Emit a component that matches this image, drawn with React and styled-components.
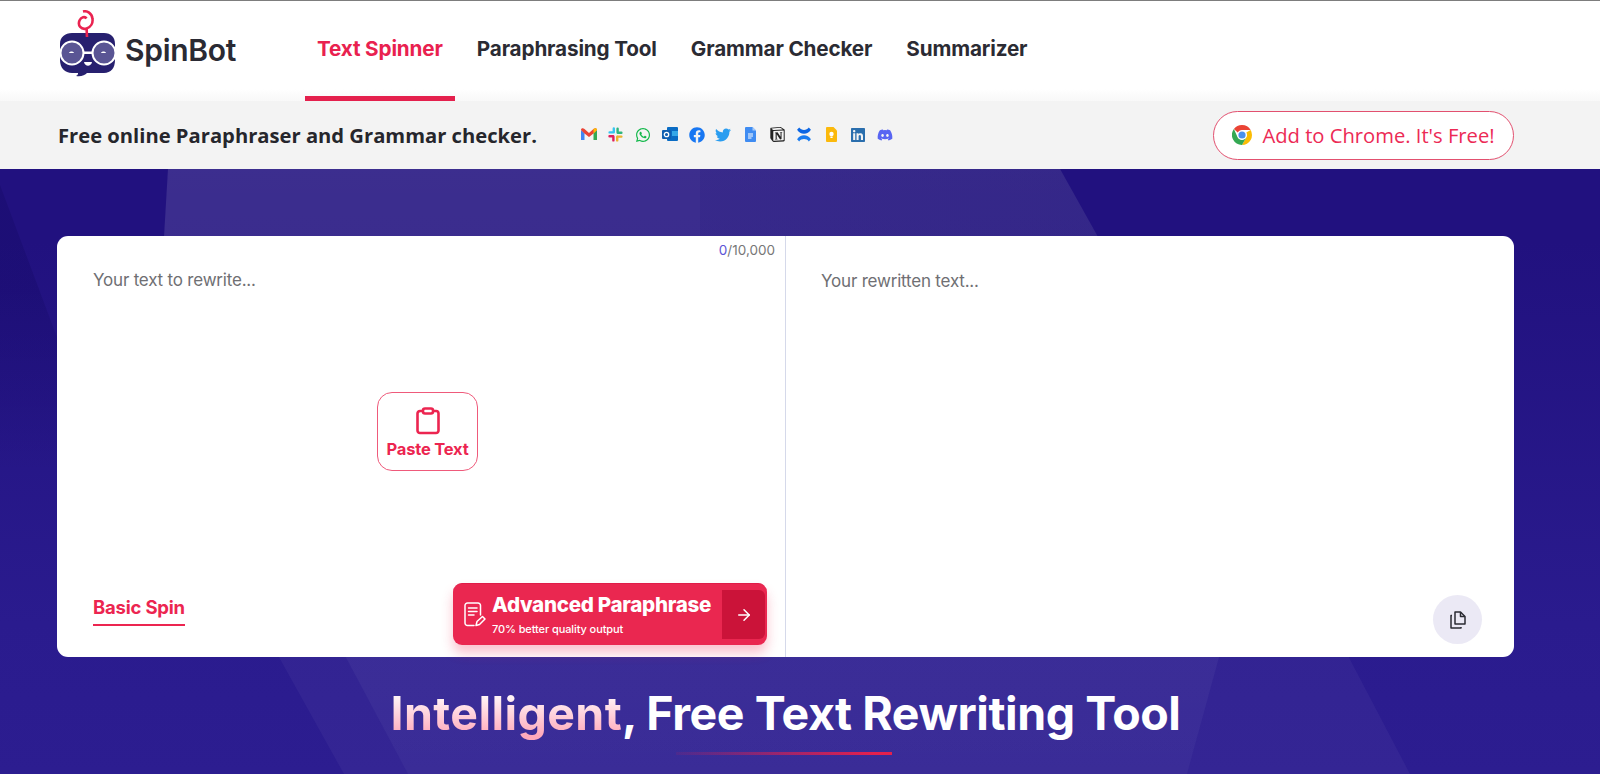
import React from 'react'
import styled, { createGlobalStyle } from 'styled-components'
import { FaWhatsapp, FaFacebook, FaTwitter, FaLinkedin, FaDiscord } from 'react-icons/fa'
import { SiNotion } from 'react-icons/si'
import { ArrowRight } from 'lucide-react'

const GlobalStyle = createGlobalStyle`
    html, body {
        margin: 0;
        padding: 0;
        background: #fff;
    }
    body {
        font-family: "Inter", "Liberation Sans", sans-serif;
        overflow: hidden;
    }
`;

const Page = styled.div`
    width: 1600px;
    height: 774px;
    display: flex;
    flex-direction: column;
    overflow: hidden;
    border-top: 1px solid #7d7d7d;
    box-sizing: border-box;
`;

const Header = styled.header`
    height: 100px;
    flex: none;
    display: flex;
    align-items: stretch;
    padding-left: 59px;
    background: linear-gradient(#fff 88%, #f8f8f8);
    box-sizing: border-box;
`;

const Brand = styled.div`
    display: flex;
    align-items: center;
    gap: 8px;
    width: 246px;
    flex: none;
`;

const LogoMark = styled.svg`
    align-self: flex-start;
    margin-top: 9px;
    flex: none;
`;

const BrandName = styled.span`
    font-size: 30px;
    font-weight: 600;
    letter-spacing: -0.3px;
    color: #2a2a33;
    margin-top: -2px;
`;

const Nav = styled.nav`
    display: flex;
    align-items: stretch;
    gap: 10px;
`;

const NavItem = styled.a`
    display: flex;
    align-items: center;
    padding: 0 12px;
    font-size: 20.7px;
    font-weight: 700;
    letter-spacing: -0.15px;
    white-space: nowrap;
    color: ${props => props.active ? '#e9214f' : '#2b2b33'};
    border-bottom: 5px solid ${props => props.active ? '#e4204d' : 'transparent'};
`;

const SubBar = styled.div`
    height: 68px;
    flex: none;
    display: flex;
    align-items: center;
    padding: 0 86px 0 58px;
    background: #f3f3f3;
    box-sizing: border-box;
`;

const Tagline = styled.h2`
    margin: 0;
    width: 523px;
    flex: none;
    font-family: "Open Sans", sans-serif;
    font-size: 20.2px;
    font-weight: 700;
    color: #26262c;
    white-space: nowrap;
`;

const AppIcons = styled.div`
    display: flex;
    align-items: center;
    gap: 10.9px;
    margin-top: -1px;
`;

const AppIcon = styled.span`
    width: 16px;
    height: 16px;
    display: flex;
    align-items: center;
    justify-content: center;
`;

const ChromeButton = styled.a`
    margin-left: auto;
    height: 49px;
    width: 301px;
    box-sizing: border-box;
    display: flex;
    align-items: center;
    justify-content: center;
    gap: 10px;
    background: #fff;
    border: 1px solid #e2506f;
    border-radius: 25px;
    font-family: "Open Sans", sans-serif;
    font-size: 20.2px;
    color: #ec2a55;
    white-space: nowrap;
`;

const Hero = styled.section`
    position: relative;
    flex: 1;
    overflow: hidden;
    background: linear-gradient(180deg, #21117f 0%, #21117f 12%, #2a1b8e 75%, #2c1d90 100%);
`;

const Backdrop = styled.div`
    position: absolute;
    inset: 0;
    clip-path: ${props => props.shape};
    background: ${props => props.tint};
`;

const HeroInner = styled.div`
    position: relative;
    padding: 67px 86px 0 57px;
    display: flex;
    flex-direction: column;
`;

const Card = styled.div`
    height: 421px;
    display: grid;
    grid-template-columns: 728px 1fr;
    background: #fff;
    border-radius: 11px;
`;

const Pane = styled.div`
    position: relative;
    padding: ${props => props.divided ? '35px 35px' : '34px 36px'};
    font-size: 17px;
    line-height: 21px;
    color: #6f6f73;
    letter-spacing: -0.2px;
    border-left: ${props => props.divided ? '1px solid #d5d9ea' : 'none'};
`;

const Counter = styled.span`
    position: absolute;
    top: 4px;
    right: 10px;
    font-size: 13.5px;
    letter-spacing: 0;
    color: #777;
`;

const CounterValue = styled.span`
    color: #5b54d6;
`;

const PasteButton = styled.button`
    position: absolute;
    left: 320px;
    top: 156px;
    width: 101px;
    height: 79px;
    box-sizing: border-box;
    padding: 14px 0 0;
    display: flex;
    flex-direction: column;
    align-items: center;
    gap: 4px;
    background: #fff;
    border: 1px solid #ef5a7b;
    border-radius: 15px;
    font-family: "Inter", sans-serif;
    font-size: 16.5px;
    font-weight: 700;
    letter-spacing: -0.2px;
    color: #ec2550;
    white-space: nowrap;
`;

const BasicSpin = styled.a`
    position: absolute;
    left: 36px;
    bottom: 31px;
    padding-bottom: 5px;
    font-size: 18.5px;
    line-height: 23px;
    font-weight: 700;
    letter-spacing: -0.2px;
    color: #ec2550;
    border-bottom: 2px solid #ec2550;
`;

const AdvancedButton = styled.button`
    position: absolute;
    right: 18px;
    bottom: 12px;
    width: 314px;
    height: 62px;
    box-sizing: border-box;
    padding: 0;
    display: flex;
    align-items: center;
    background: #ea2750;
    border: none;
    border-top: 1px solid #e01c48;
    border-radius: 9px;
    box-shadow: 0 8px 12px rgba(236, 39, 80, 0.28);
    color: #fff;
    font-family: "Inter", sans-serif;
    text-align: left;
`;

const AdvancedIcon = styled.span`
    display: flex;
    margin-left: 11px;
    margin-right: 6px;
`;

const AdvancedText = styled.span`
    flex: 1;
    display: flex;
    flex-direction: column;
    gap: 7px;
`;

const AdvancedTitle = styled.span`
    font-size: 20.6px;
    font-weight: 800;
    letter-spacing: -0.3px;
    line-height: 22px;
    white-space: nowrap;
`;

const AdvancedNote = styled.span`
    font-size: 11px;
    font-weight: 500;
    letter-spacing: -0.1px;
    line-height: 13px;
`;

const ArrowBox = styled.span`
    width: 43px;
    height: 49px;
    margin-right: 2px;
    display: flex;
    align-items: center;
    justify-content: center;
    background: #cb1339;
    border-radius: 0 6px 6px 0;
`;

const CopyButton = styled.button`
    position: absolute;
    right: 32px;
    bottom: 13px;
    width: 49px;
    height: 49px;
    padding: 0;
    display: flex;
    align-items: center;
    justify-content: center;
    background: #ebe9f5;
    border: none;
    border-radius: 50%;
`;

const Title = styled.h1`
    margin: 29px 0 0;
    text-align: center;
    font-size: 46.5px;
    font-weight: 700;
    line-height: 54px;
    letter-spacing: -0.45px;
    color: #fff;
    white-space: nowrap;
`;

const TitleAccent = styled.span`
    letter-spacing: 0.4px;
    background: linear-gradient(180deg, #fff 10%, #ffa9bb 90%);
    -webkit-background-clip: text;
    background-clip: text;
    color: transparent;
`;

const TitleRule = styled.div`
    width: 216px;
    height: 3px;
    margin: 12px 0 0 619px;
    background: linear-gradient(90deg, rgba(228, 32, 77, 0.1), #e4204d 92%);
`;

function Logo() {
    return (
        <LogoMark width="58" height="67" viewBox="0 0 58 67">
            <path d="M13 23 H45 C52 23 56 27 56 34 V50 C56 58 52 63 45 63 H28 C26 65 22 67 17 66 C19 65 19 64 19 63 H13 C6 63 1 58 1 50 V34 C1 27 6 23 13 23 Z" fill="#27206f" />
            <path d="M28 27 L27.6 18.5 C32 17 34 13 33.5 9 C33 3 28 .5 24 1.5 M27.6 18.5 C22 20 18.5 15.5 20.5 10.5 C22 7 26 6 27.5 8.5" fill="none" stroke="#ea2350" strokeWidth="2.6" />
            <circle cx="13" cy="43" r="11.5" fill="#5a5594" stroke="#fff" strokeWidth="2" />
            <circle cx="45" cy="43" r="11.5" fill="#5a5594" stroke="#fff" strokeWidth="2" />
            <rect x="24" y="41.5" width="10" height="2.5" fill="#fff" />
            <path d="M10 43 C10.5 41 14.5 41 15 43 Z" fill="#fff" />
            <path d="M42 43 C42.5 41 46.5 41 47 43 Z" fill="#fff" />
            <path d="M25 52 H33 C32 57 26 57 25 52 Z" fill="#fff" />
        </LogoMark>
    )
}

function Gmail() {
    return (
        <svg width="16" height="13" viewBox="0 0 16 13">
            <path d="M0 2 V12 H3.5 V5 Z" fill="#4285f4" />
            <path d="M16 2 V12 H12.5 V5 Z" fill="#34a853" />
            <path d="M0 2 C0 0 2 -.5 3.5 1 L8 5 L12.5 1 C14 -.5 16 0 16 2 L12.5 5.5 L8 9 L3.5 5.5 Z" fill="#ea4335" />
            <path d="M12.5 1 C14 -.5 16 0 16 2 L12.5 5.5 Z" fill="#fbbc04" />
        </svg>
    )
}

function Slack() {
    return (
        <svg width="15" height="15" viewBox="0 0 15 15" strokeWidth="2.4" strokeLinecap="round">
            <path d="M1.5 9.2 H5.2 M5.4 9.6 V13.4" stroke="#e01e5a" />
            <path d="M5.8 1.5 V5.2 M5.4 5.4 H1.6" stroke="#36c5f0" />
            <path d="M13.4 5.8 H9.8 M9.6 5.4 V1.6" stroke="#2eb67d" />
            <path d="M9.2 13.4 V9.8 M9.6 9.6 H13.4" stroke="#ecb22e" />
        </svg>
    )
}

function Outlook() {
    return (
        <svg width="16" height="15" viewBox="0 0 16 15">
            <rect x="5" y="0" width="11" height="14" rx="1" fill="#0a6cc4" />
            <rect x="10" y="4" width="6" height="5" fill="#35a8e8" />
            <rect x="0" y="3" width="9" height="9" rx="1" fill="#0f5fb0" />
            <circle cx="4.5" cy="7.5" r="2.2" fill="none" stroke="#fff" strokeWidth="1.3" />
        </svg>
    )
}

function Docs() {
    return (
        <svg width="11" height="15" viewBox="0 0 11 15">
            <path d="M1 0 H7.5 L11 3.5 V14 a1 1 0 0 1 -1 1 H1 a1 1 0 0 1 -1 -1 V1 a1 1 0 0 1 1 -1 Z" fill="#3f8cf2" />
            <path d="M7.5 0 L11 3.5 H7.5 Z" fill="#a9ccfa" />
            <path d="M3 7 H8 M3 9 H8 M3 11 H6.5" stroke="#fff" strokeWidth="1" />
        </svg>
    )
}

function Confluence() {
    return (
        <svg width="16" height="15" viewBox="0 0 15 14">
            <path d="M1 3 L3 1 C5 4 10 4 12 1 L14 3 C11 8 4 8 1 3 Z" fill="#0c66e4" transform="translate(0 -.5)" />
            <path d="M1 11 L3 13 C5 10 10 10 12 13 L14 11 C11 6 4 6 1 11 Z" fill="#1a7cf0" transform="translate(0 .5)" />
        </svg>
    )
}

function Keep() {
    return (
        <svg width="11" height="15" viewBox="0 0 11 15">
            <path d="M1 0 H7.5 L11 3.5 V14 a1 1 0 0 1 -1 1 H1 a1 1 0 0 1 -1 -1 V1 a1 1 0 0 1 1 -1 Z" fill="#fbb90c" />
            <circle cx="5.5" cy="7" r="2.2" fill="#fff" />
            <rect x="4.4" y="9.5" width="2.2" height="1.5" fill="#fff" />
        </svg>
    )
}

function Chrome() {
    return (
        <svg width="20" height="20" viewBox="0 0 20 20">
            <path d="M10 0 A10 10 0 0 1 18.66 5 H10 A5 5 0 0 0 5.7 7.5 L1.9 4.1 A10 10 0 0 1 10 0 Z" fill="#ea4335" />
            <path d="M18.66 5 A10 10 0 0 1 10 20 L14.3 12.5 A5 5 0 0 0 14.3 7.5 Z" fill="#fbbc04" />
            <path d="M10 20 A10 10 0 0 1 1.9 4.1 L5.7 12.5 A5 5 0 0 0 14.3 12.5 Z" fill="#34a853" />
            <circle cx="10" cy="10" r="4.6" fill="#fff" />
            <circle cx="10" cy="10" r="3.6" fill="#4a90ee" />
        </svg>
    )
}

function Clipboard() {
    return (
        <svg width="24" height="28" viewBox="0 0 24 28" fill="none" stroke="#ec2550" strokeWidth="2.6" strokeLinejoin="round">
            <path d="M7 4 H4 a2.5 2.5 0 0 0 -2.5 2.5 V23.5 A2.5 2.5 0 0 0 4 26 H20 a2.5 2.5 0 0 0 2.5 -2.5 V6.5 A2.5 2.5 0 0 0 20 4 H17" />
            <rect x="7" y="1.5" width="10" height="5" rx="2" />
        </svg>
    )
}

function NoteEdit() {
    return (
        <svg width="22" height="25" viewBox="0 0 22 25" fill="none" stroke="#fff" strokeWidth="1.5" strokeLinecap="round" strokeLinejoin="round">
            <path d="M10 23.5 H3.5 A2.5 2.5 0 0 1 1 21 V3.5 A2.5 2.5 0 0 1 3.5 1 H14 A2.5 2.5 0 0 1 16.5 3.5 V13" />
            <path d="M4.5 6 H13 M4.5 9.5 H13 M4.5 13 H10" />
            <path d="M12 23.5 L13 19.5 L18.5 14.5 L21 17 L15.5 22.5 Z" />
        </svg>
    )
}

function CopyIcon() {
    return (
        <svg width="16" height="18" viewBox="0 0 16 18" fill="none" stroke="#2b2b33" strokeWidth="1.5" strokeLinejoin="round">
            <path d="M5 1 H10.5 L15 5.5 V13 H5 Z" />
            <path d="M10.5 1 V5.5 H15" />
            <path d="M2 4.5 H1 V17 H11 V16" />
        </svg>
    )
}

const apps = [
    <Gmail />,
    <Slack />,
    <FaWhatsapp size={16} color="#12b84a" />,
    <Outlook />,
    <FaFacebook size={16} color="#1877f2" />,
    <FaTwitter size={16} color="#2a9df0" />,
    <Docs />,
    <SiNotion size={15} color="#222" />,
    <Confluence />,
    <Keep />,
    <FaLinkedin size={16} color="#2a6ead" />,
    <FaDiscord size={16} color="#5865f2" />,
];

function App() {
    return (
        <Page>
            <GlobalStyle />
            <Header>
                <Brand>
                    <Logo />
                    <BrandName>SpinBot</BrandName>
                </Brand>
                <Nav>
                    <NavItem active>Text Spinner</NavItem>
                    <NavItem>Paraphrasing Tool</NavItem>
                    <NavItem>Grammar Checker</NavItem>
                    <NavItem>Summarizer</NavItem>
                </Nav>
            </Header>
            <SubBar>
                <Tagline>Free online Paraphraser and Grammar checker.</Tagline>
                <AppIcons>
                    {apps.map((icon, i) => <AppIcon key={i}>{icon}</AppIcon>)}
                </AppIcons>
                <ChromeButton><Chrome />Add to Chrome. It's Free!</ChromeButton>
            </SubBar>
            <Hero>
                <Backdrop
                    shape="polygon(0 16px, 110px 310px, 0 310px)"
                    tint="linear-gradient(180deg, rgba(10, 0, 80, 0.2) 20%, rgba(10, 0, 80, 0) 50%)"
                />
                <Backdrop
                    shape="polygon(168px 0, 1060px 0, 1098px 68px, 1221px 481px, 1187px 605px, 408px 605px, 342px 481px, 164px 68px)"
                    tint="linear-gradient(180deg, rgba(255,255,255,0.12), rgba(255,255,255,0.065))"
                />
                <Backdrop
                    shape="polygon(700px 0, 1060px 0, 1098px 68px, 700px 68px)"
                    tint="linear-gradient(90deg, rgba(20, 10, 110, 0), rgba(20, 10, 110, 0.25))"
                />
                <Backdrop
                    shape="polygon(275px 481px, 342px 481px, 408px 605px, 344px 605px)"
                    tint="rgba(255, 255, 255, 0.04)"
                />
                <Backdrop
                    shape="polygon(1221px 481px, 1345px 481px, 1410px 605px, 1187px 605px)"
                    tint="rgba(255, 255, 255, 0.04)"
                />
                <HeroInner>
                    <Card>
                        <Pane>
                            Your text to rewrite...
                            <Counter><CounterValue>0</CounterValue>/10,000</Counter>
                            <PasteButton><Clipboard />Paste Text</PasteButton>
                            <BasicSpin>Basic Spin</BasicSpin>
                            <AdvancedButton>
                                <AdvancedIcon><NoteEdit /></AdvancedIcon>
                                <AdvancedText>
                                    <AdvancedTitle>Advanced Paraphrase</AdvancedTitle>
                                    <AdvancedNote>70% better quality output</AdvancedNote>
                                </AdvancedText>
                                <ArrowBox><ArrowRight size={18} color="#fff" /></ArrowBox>
                            </AdvancedButton>
                        </Pane>
                        <Pane divided>
                            Your rewritten text...
                            <CopyButton><CopyIcon /></CopyButton>
                        </Pane>
                    </Card>
                    <Title><TitleAccent>Intelligent</TitleAccent>, Free Text Rewriting Tool</Title>
                    <TitleRule />
                </HeroInner>
            </Hero>
        </Page>
    )
}

export default App
